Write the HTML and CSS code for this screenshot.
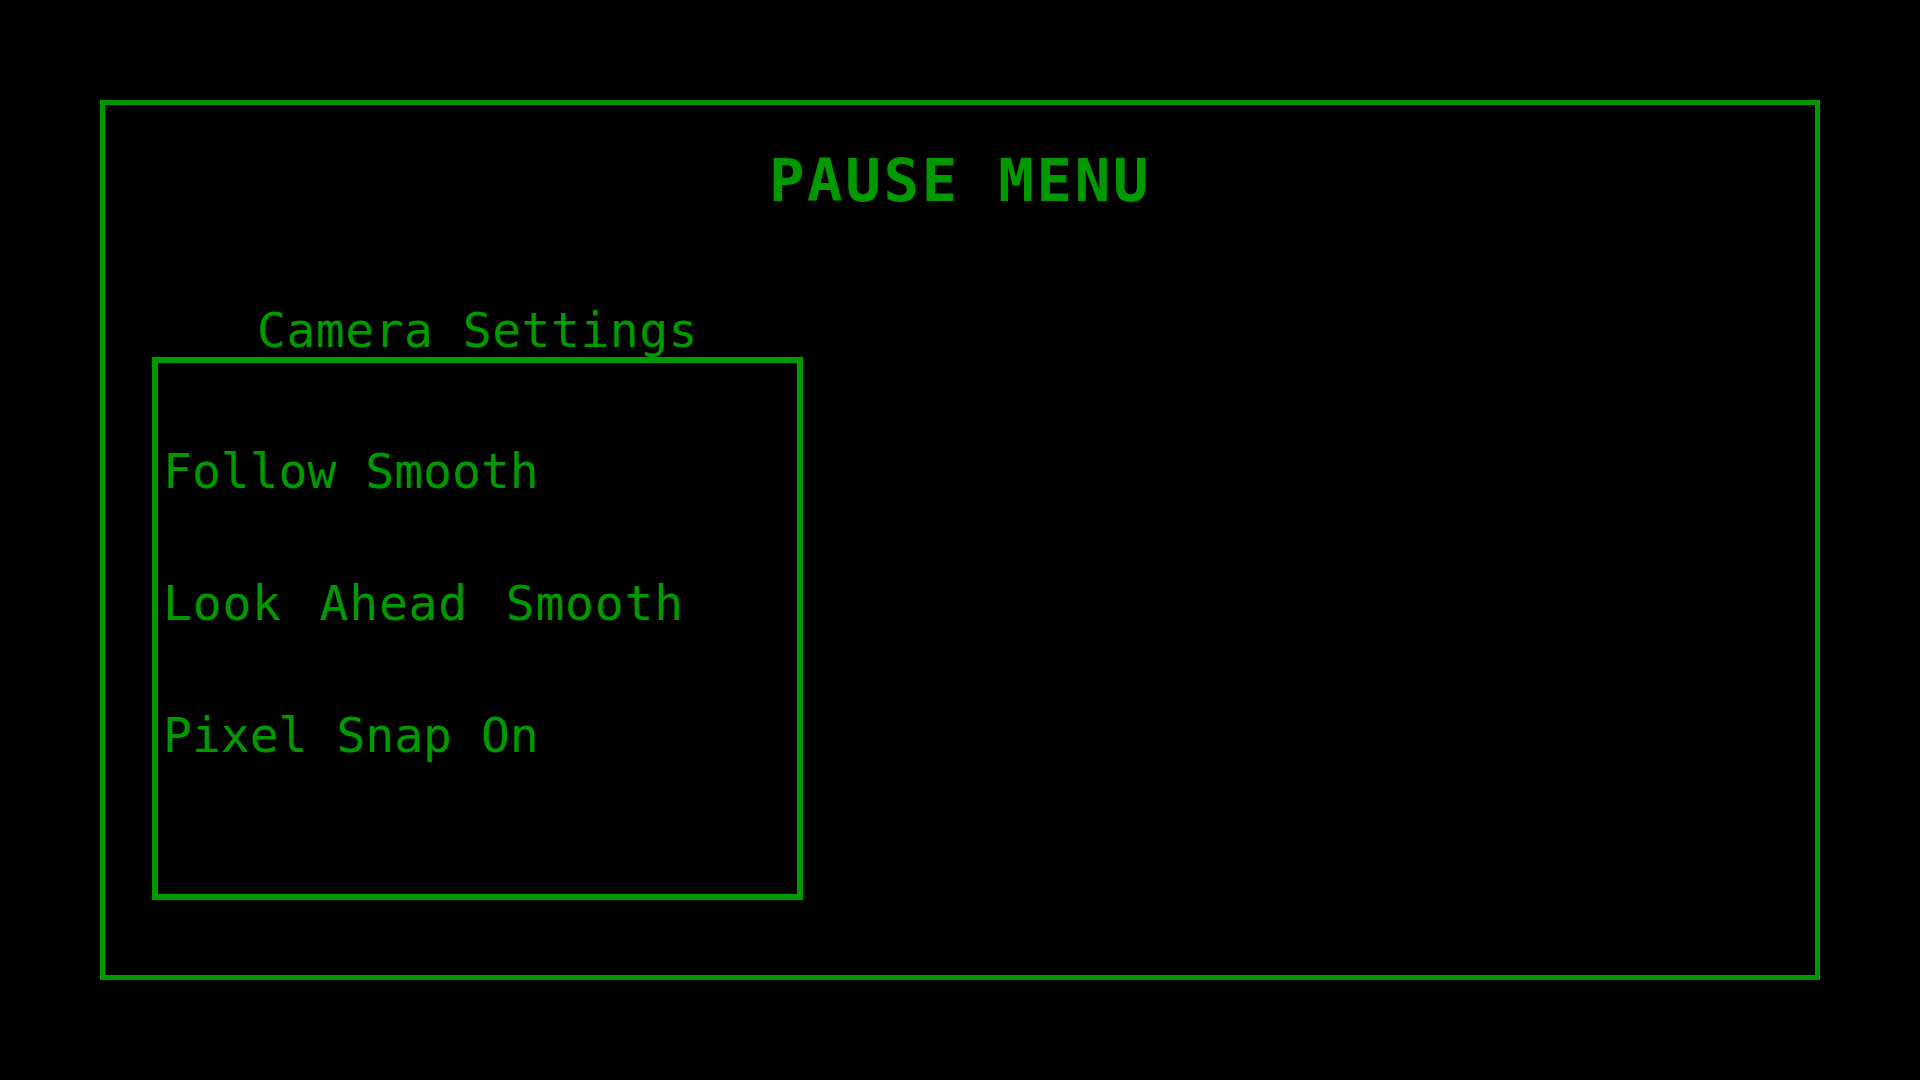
FILE: index.html
```html
<!DOCTYPE html>
<html>
<head>
<meta charset="utf-8">
<link rel="stylesheet" href="styles.css">
</head>
<body>
<div class="pause-menu">
  <h1 class="title">PAUSE MENU</h1>
  <section class="group">
    <div class="group-label">Camera Settings</div>
    <div class="group-box">
      <div class="option">Follow Smooth</div>
      <div class="option option-wide">Look Ahead Smooth</div>
      <div class="option">Pixel Snap On</div>
    </div>
  </section>
</div>
</body>
</html>
```
FILE: styles.css
```css
html, body {
  margin: 0;
  padding: 0;
  background: #000;
}
body {
  width: 1920px;
  height: 1080px;
  overflow: hidden;
  font-family: "DejaVu Sans Mono", "Liberation Mono", monospace;
  color: #009900;
}
.pause-menu {
  box-sizing: border-box;
  margin: 100px 0 0 100px;
  width: 1720px;
  height: 880px;
  border: 5px solid #009900;
  padding-top: 46px;
}
.title {
  margin: 0;
  font-size: 59px;
  line-height: 60px;
  font-weight: bold;
  letter-spacing: 2.7px;
  text-align: center;
}
.group {
  margin: 95px 0 0 47px;
  width: 651px;
}
.group-label {
  font-size: 48px;
  line-height: 48px;
  letter-spacing: 0.5px;
  text-align: center;
  margin-bottom: 3px;
}
.group-box {
  box-sizing: border-box;
  width: 651px;
  height: 543px;
  border: 6px solid #009900;
  box-shadow: 0 0 1px #005500, inset 0 0 1px #005500;
  padding: 84px 0 0 5px;
  display: flex;
  flex-direction: column;
  gap: 84px;
}
.option {
  font-size: 48px;
  line-height: 48px;
}
.option-wide {
  word-spacing: 8px;
  letter-spacing: 0.8px;
}
```
